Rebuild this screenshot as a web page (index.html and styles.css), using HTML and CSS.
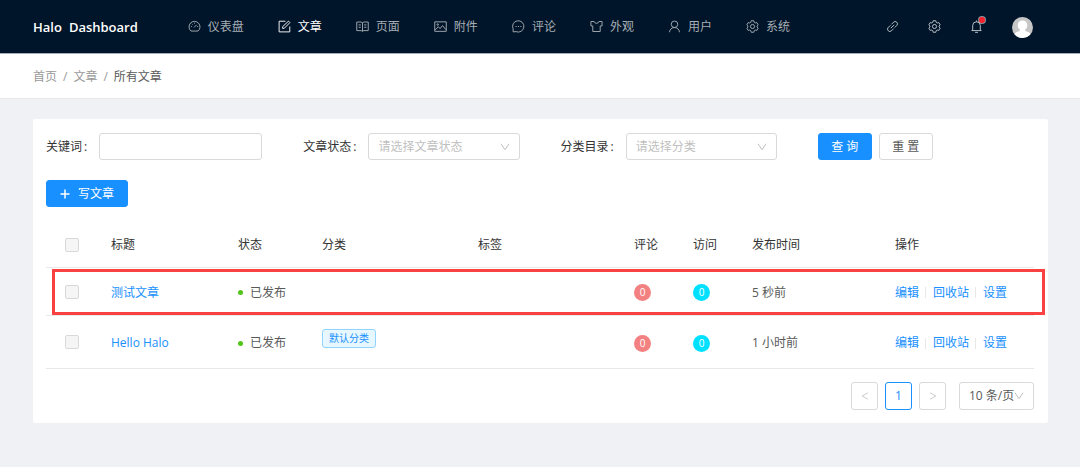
FILE: index.html
```html
<!DOCTYPE html>
<html lang="zh-CN">
<head>
<meta charset="utf-8">
<title>Halo Dashboard</title>
<meta name="viewport" content="width=device-width, initial-scale=1">
<link rel="stylesheet" href="styles.css">
</head>
<body>
<svg class="sprite" aria-hidden="true">
  <symbol id="i-gauge" viewBox="0 0 14 14"><path d="M3.2 11.9A5.9 5.9 0 1 1 10.8 11.9Z"/><path d="M6.5 8 9.3 5.2M7 2.9v1M3.1 7h1M9.9 7h1M4.2 4.2l.6.6"/></symbol>
  <symbol id="i-edit" viewBox="0 0 14 14"><path d="M8 1.3H1.200v11.500h11.500V7"/><path d="M5 9V7.2L11.3 1.2 12.8 2.8 6.7 9Z"/></symbol>
  <symbol id="i-book" viewBox="0 0 14 14"><path d="M.8 2.200h4.700L7 3l1.500-.8h4.700v9.200H8.5L7 12.200l-1.500-.8H.8ZM7 3v9M2.800 5.300h2.400M2.800 7.800h2.400M8.800 5.300h2.400M8.800 7.800h2.400"/></symbol>
  <symbol id="i-picture" viewBox="0 0 14 14"><path d="M.8 2h12.400v10.200H.8Z"/><path d="M1.200 10.800 4.600 7.200 6.500 9.300 9.200 6 12.800 10.400"/><circle cx="4" cy="4.900" r=".8"/></symbol>
  <symbol id="i-message" viewBox="0 0 14 14"><path d="M1.200 12.800V9.500A6.100 6.100 0 1 1 4.300 12.500Z"/><path d="M3.800 7h1.200M6.400 7h1.200M9 7h1.200"/></symbol>
  <symbol id="i-skin" viewBox="0 0 14 14"><path d="M1 1.600h3.400a2.700 2.700 0 0 0 5.200 0H13v4.800h-2v6H3v-6H1Z"/></symbol>
  <symbol id="i-user" viewBox="0 0 14 14"><circle cx="7" cy="4.600" r="3.500"/><path d="M1.600 13.200C1.800 10.200 4 8.100 7 8.100s5.200 2.100 5.400 5.100"/></symbol>
  <symbol id="i-gear" viewBox="0 0 14 14"><path d="M5.600.8h2.800l.5 1.800 1.100.6 1.700-.4 1.400 2.400L11.900 6.500v1.100l1.200 1.200-1.400 2.400-1.700-.4-1.100.6-.5 1.800H5.600l-.5-1.800-1.100-.6-1.700.4L.9 8.800l1.200-1.200V6.500L.9 5.200l1.400-2.400 1.700.4 1.100-.6Z"/><circle cx="7" cy="7" r="2.200"/></symbol>
  <symbol id="i-link" viewBox="0 0 14 14"><path d="M5.800 4.700 8.100 2.400a2.450 2.450 0 0 1 3.500 3.500L9.300 8.200M8.200 9.300l-2.300 2.300a2.450 2.450 0 0 1-3.500-3.500L4.700 5.800M5.200 8.800l3.600-3.600"/></symbol>
  <symbol id="i-bell" viewBox="0 0 14 14"><path d="M1.600 11.400h10.800M2.900 11.400V6a4.100 4.100 0 0 1 8.200 0v5.400M7 .5v1.400M5.500 13.300h3"/></symbol>
  <symbol id="i-down" viewBox="0 0 10 10"><path d="M1 1.800 5 7.700 9 1.800"/></symbol>
  <symbol id="i-left" viewBox="0 0 10 10"><path d="M8.500 1 1.500 5 8.500 9"/></symbol>
  <symbol id="i-right" viewBox="0 0 10 10"><path d="M1.500 1 8.500 5 1.500 9"/></symbol>
  <symbol id="i-plus" viewBox="0 0 10 10"><path d="M5 .5v9M.5 5h9"/></symbol>
</svg>

<header class="header">
  <a class="logo" href="#"><span>Halo</span><span>Dashboard</span></a>
  <nav class="nav">
    <a class="nav-item" href="#"><svg class="icon"><use href="#i-gauge"/></svg>仪表盘</a>
    <a class="nav-item active" href="#"><svg class="icon"><use href="#i-edit"/></svg>文章</a>
    <a class="nav-item" href="#"><svg class="icon"><use href="#i-book"/></svg>页面</a>
    <a class="nav-item" href="#"><svg class="icon"><use href="#i-picture"/></svg>附件</a>
    <a class="nav-item" href="#"><svg class="icon"><use href="#i-message"/></svg>评论</a>
    <a class="nav-item" href="#"><svg class="icon"><use href="#i-skin"/></svg>外观</a>
    <a class="nav-item" href="#"><svg class="icon"><use href="#i-user"/></svg>用户</a>
    <a class="nav-item" href="#"><svg class="icon"><use href="#i-gear"/></svg>系统</a>
  </nav>
  <div class="tools">
    <a class="tool" href="#" aria-label="链接"><svg class="icon"><use href="#i-link"/></svg></a>
    <button class="tool" type="button" aria-label="设置"><svg class="icon"><use href="#i-gear"/></svg></button>
    <button class="tool" type="button" aria-label="通知"><svg class="icon"><use href="#i-bell"/></svg><span class="dot"></span></button>
    <button class="tool avatar" type="button" aria-label="用户">
      <svg viewBox="0 0 21 21"><circle cx="10.500" cy="10.500" r="10.500" fill="#c6c6c6"/><path fill="#fff" d="M10.500 3.500c3 0 4.800 2 4.800 4.800 0 2-1 3.600-2.300 4.500 0 1 .5 1.400 2.200 1.900 1.500.4 2.600 1 3.200 2.600a10.500 10.500 0 0 1-15.800 0c.6-1.600 1.700-2.200 3.200-2.600 1.700-.5 2.200-.9 2.200-1.900-1.300-.9-2.300-2.500-2.300-4.500 0-2.800 1.800-4.800 4.800-4.800Z"/></svg>
    </button>
  </div>
</header>

<nav class="breadcrumb" aria-label="位置">
  <a href="#">首页</a><span class="slash">/</span><a href="#">文章</a><span class="slash">/</span><span class="current">所有文章</span>
</nav>

<main class="card">
  <form class="filters">
    <div class="field"><label for="kw">关键词<span class="colon">:</span></label><input id="kw" class="control" type="text"></div>
    <div class="field"><label for="st">文章状态<span class="colon">:</span></label>
      <div class="select"><select id="st" class="control"><option>请选择文章状态</option></select><svg class="arrow"><use href="#i-down"/></svg></div></div>
    <div class="field"><label for="cat">分类目录<span class="colon">:</span></label>
      <div class="select"><select id="cat" class="control"><option>请选择分类</option></select><svg class="arrow"><use href="#i-down"/></svg></div></div>
    <div class="buttons"><button class="btn primary" type="button">查 询</button><button class="btn" type="button">重 置</button></div>
  </form>

  <button class="btn primary write" type="button"><svg class="plus"><use href="#i-plus"/></svg>写文章</button>

  <table class="table">
    <colgroup><col class="c-check"><col class="c-title"><col class="c-status"><col class="c-wide"><col class="c-wide"><col class="c-count"><col class="c-count"><col class="c-time"><col class="c-action"></colgroup>
    <thead>
      <tr><th class="check"><input type="checkbox" aria-label="全选"></th><th>标题</th><th>状态</th><th>分类</th><th>标签</th><th>评论</th><th>访问</th><th>发布时间</th><th>操作</th></tr>
    </thead>
    <tbody>
      <tr class="marked">
        <td class="check"><input type="checkbox" aria-label="选择 测试文章"></td>
        <td><a href="#">测试文章</a></td>
        <td><span class="status">已发布</span></td>
        <td></td><td></td>
        <td><span class="badge comments">0</span></td>
        <td><span class="badge visits">0</span></td>
        <td>5 秒前</td>
        <td><div class="actions"><a href="#">编辑</a><a href="#">回收站</a><a href="#">设置</a></div></td>
      </tr>
      <tr>
        <td class="check"><input type="checkbox" aria-label="选择 Hello Halo"></td>
        <td><a href="#">Hello Halo</a></td>
        <td><span class="status">已发布</span></td>
        <td><span class="tag">默认分类</span></td><td></td>
        <td><span class="badge comments">0</span></td>
        <td><span class="badge visits">0</span></td>
        <td>1 小时前</td>
        <td><div class="actions"><a href="#">编辑</a><a href="#">回收站</a><a href="#">设置</a></div></td>
      </tr>
    </tbody>
  </table>

  <div class="pagination">
    <button class="page" type="button" aria-label="上一页"><svg class="arrow-icon"><use href="#i-left"/></svg></button>
    <button class="page on" type="button">1</button>
    <button class="page" type="button" aria-label="下一页"><svg class="arrow-icon"><use href="#i-right"/></svg></button>
    <div class="select size"><select class="control" aria-label="每页条数"><option>10 条/页</option></select><svg class="arrow"><use href="#i-down"/></svg></div>
  </div>
</main>
</body>
</html>
```

FILE: styles.css
```css
* { box-sizing: border-box; }

body {
  margin: 0;
  background: #f0f1f5;
  color: #595959;
  font: 12px/20px "Open Sans", "Noto Sans CJK SC", sans-serif;
}

a { color: #1890ff; text-decoration: none; }
button, input, select { font: inherit; color: inherit; }
svg { fill: none; stroke: currentColor; stroke-width: 1; }
.sprite { display: none; }
.icon { display: block; width: 13px; height: 13px; flex: none; }

/* Header */
.header {
  display: flex;
  align-items: center;
  height: 54px;
  padding: 0 47px 0 33px;
  background: #001529;
  border-bottom: 1px solid #a3acba;
}
.logo {
  display: flex;
  gap: 7px;
  color: #fff;
  font-size: 13px;
  font-weight: 600;
}
.nav { display: flex; gap: 34px; margin-left: 50px; }
.nav-item {
  display: flex;
  align-items: center;
  gap: 7px;
  color: #a6adb4;
  white-space: nowrap;
}
.nav-item.active { color: #fff; }
.tools { display: flex; align-items: center; gap: 29px; margin-left: auto; }
.tool {
  position: relative;
  display: block;
  padding: 0;
  border: 0;
  background: none;
  color: #c3c8cd;
}
.dot {
  position: absolute;
  top: -3px;
  right: -2px;
  width: 6px;
  height: 6px;
  border-radius: 50%;
  background: #f5222d;
  box-shadow: 0 0 0 1px #fff8;
}
.avatar svg { display: block; width: 21px; height: 21px; stroke: none; }
.avatar { margin-top: 2px; }

/* Breadcrumb */
.breadcrumb {
  display: flex;
  padding: 13px 33px 11px;
  background: #fff;
  border-bottom: 1px solid #e8e8e8;
}
.breadcrumb a, .slash { color: #999; }
.slash { padding: 0 6px; }

/* Card */
.card {
  margin: 20px 32px 44px 33px;
  padding: 14px 14px 13px 13px;
  background: #fff;
  border-radius: 2px;
}

.filters { display: grid; grid-template-columns: repeat(4, 1fr); gap: 41px; }
.field { display: flex; align-items: center; min-width: 0; }
.field label { flex: none; color: #333; }
.colon { padding: 0 12px 0 2px; }
.control {
  display: block;
  width: 100%;
  min-width: 0;
  height: 27px;
  padding: 0 9px;
  border: 1px solid #d9d9d9;
  border-radius: 3px;
  background: #fff;
  appearance: none;
}
.field .control { flex: 1; }
.select { position: relative; flex: 1; min-width: 0; }
.field .select .control { color: #bfbfbf; }
.arrow {
  position: absolute;
  top: 9px;
  right: 10px;
  width: 10px;
  height: 10px;
  color: #bfbfbf;
  pointer-events: none;
}
.buttons { display: flex; gap: 7px; }
.btn {
  height: 27px;
  padding: 0 13px;
  border: 1px solid #d9d9d9;
  border-radius: 3px;
  background: #fff;
  line-height: 20px;
  white-space: nowrap;
}
.buttons .btn { width: 54px; padding: 0; }
.primary { border-color: #1890ff; background: #1890ff; color: #fff; }
.write { display: flex; align-items: center; gap: 8px; margin: 20px 0 16px; }
.plus { width: 10px; height: 10px; stroke-width: 1.5; }

/* Table */
.table { width: 100%; border-collapse: separate; border-spacing: 0; table-layout: fixed; }
.c-check { width: 51px; }
.c-title { width: 127px; }
.c-status { width: 84px; }
.c-wide { width: 156px; }
.c-count { width: 59px; }
.c-time { width: 143px; }
.c-action { width: 153px; }
th, td {
  height: 48px;
  padding: 14px 0 12px 14px;
  border-bottom: 1px solid #e8e8e8;
  text-align: left;
}
th { height: 45px; padding: 12px 0 12px 14px; font-weight: 400; color: #333; }
.table .check { padding: 0; text-align: center; }
.check input {
  display: block;
  width: 14px;
  height: 14px;
  margin: 0 auto;
  border: 1px solid #d9d9d9;
  border-radius: 2px;
  background: #f5f5f5;
  appearance: none;
}
.marked { position: relative; }
.marked::after {
  content: "";
  position: absolute;
  inset: 1px -11px 1px 6px;
  border: 3px solid #f94141;
  pointer-events: none;
}
.status { display: flex; align-items: center; gap: 7px; }
.status::before {
  content: "";
  width: 5px;
  height: 5px;
  border-radius: 50%;
  background: #52c41a;
}
.tag {
  display: block;
  width: fit-content;
  height: 19px;
  margin: -1px 0 8px;
  padding: 0 6px;
  border: 1px solid #91d5ff;
  border-radius: 3px;
  background: #e6f7ff;
  color: #1890ff;
  font-size: 10px;
  line-height: 17px;
}
.badge {
  display: block;
  width: 17px;
  height: 17px;
  border-radius: 50%;
  color: #fff;
  font-size: 10px;
  line-height: 17px;
  text-align: center;
}
.comments { background: #f38181; }
.visits { background: #00e0ff; }
.actions { display: flex; align-items: center; }
.actions a + a { display: flex; align-items: center; }
.actions a + a::before {
  content: "";
  width: 1px;
  height: 11px;
  margin: 0 7px 0 6px;
  background: #e8e8e8;
}

/* Pagination */
.pagination { display: flex; justify-content: flex-end; gap: 7px; margin-top: 13px; }
.page {
  display: flex;
  align-items: center;
  justify-content: center;
  width: 27px;
  height: 28px;
  padding: 0;
  border: 1px solid #d9d9d9;
  border-radius: 3px;
  background: #fff;
}
.page.on { border-color: #1890ff; color: #1890ff; }
.arrow-icon { width: 8px; height: 10px; color: #bfbfbf; }
.size { flex: none; width: 75px; margin-left: 6px; }
.size .control { height: 28px; }
```
